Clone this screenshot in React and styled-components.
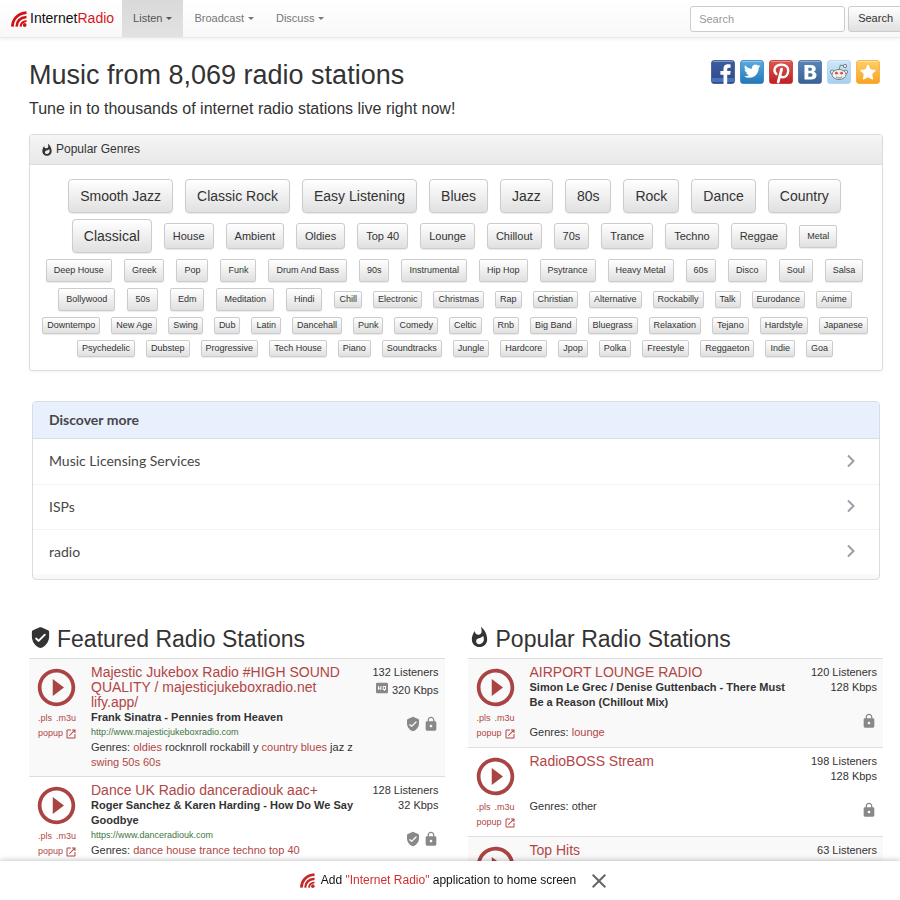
import React from 'react';

import styled, { createGlobalStyle } from 'styled-components';
import {
  MdHighQuality,
  MdLock,
  MdOpenInNew,
  MdPlayCircleOutline,
  MdWhatshot,
} from 'react-icons/md';

const genres = [
  ['lg', ['Smooth Jazz', 'Classic Rock', 'Easy Listening', 'Blues', 'Jazz', '80s', 'Rock', 'Dance', 'Country', 'Classical']],
  ['md', ['House', 'Ambient', 'Oldies', 'Top 40', 'Lounge', 'Chillout', '70s', 'Trance', 'Techno', 'Reggae']],
  ['sm', ['Metal', 'Deep House', 'Greek', 'Pop', 'Funk', 'Drum And Bass', '90s', 'Instrumental', 'Hip Hop', 'Psytrance', 'Heavy Metal', '60s', 'Disco', 'Soul', 'Salsa', 'Bollywood', '50s', 'Edm', 'Meditation', 'Hindi']],
  ['xs', ['Chill', 'Electronic', 'Christmas', 'Rap', 'Christian', 'Alternative', 'Rockabilly', 'Talk', 'Eurodance', 'Anime', 'Downtempo', 'New Age', 'Swing', 'Dub', 'Latin', 'Dancehall', 'Punk', 'Comedy', 'Celtic', 'Rnb', 'Big Band', 'Bluegrass', 'Relaxation', 'Tejano', 'Hardstyle', 'Japanese', 'Psychedelic', 'Dubstep', 'Progressive', 'Tech House', 'Piano', 'Soundtracks', 'Jungle', 'Hardcore', 'Jpop', 'Polka', 'Freestyle', 'Reggaeton', 'Indie', 'Goa']],
];

// genre entries: a string is a link, { text } is plain
const featured = [
  {
    name: 'Majestic Jukebox Radio #HIGH SOUND QUALITY / majesticjukeboxradio.net lify.app/',
    track: 'Frank Sinatra - Pennies from Heaven',
    url: 'http://www.majesticjukeboxradio.com',
    genres: ['oldies', { text: 'rocknroll rockabill y' }, 'country', 'blues', { text: 'jaz z' }, 'swing', '50s', '60s'],
    listeners: 132,
    kbps: 320,
    hq: true,
    verified: true,
  },
  {
    name: 'Dance UK Radio danceradiouk aac+',
    track: 'Roger Sanchez & Karen Harding - How Do We Say Goodbye',
    url: 'https://www.danceradiouk.com',
    genres: ['dance', 'house', 'trance', 'techno', 'top 40'],
    listeners: 128,
    kbps: 32,
    verified: true,
  },
];

const popular = [
  {
    name: 'AIRPORT LOUNGE RADIO',
    track: 'Simon Le Grec / Denise Guttenbach - There Must Be a Reason (Chillout Mix)',
    genres: ['lounge'],
    listeners: 120,
    kbps: 128,
  },
  {
    name: 'RadioBOSS Stream',
    genres: [{ text: 'other' }],
    listeners: 198,
    kbps: 128,
  },
  {
    name: 'Top Hits',
    track: 'Camila Cabello - Never be the same (radio edit)',
    genres: ['top 40'],
    listeners: 63,
    kbps: 128,
  },
];

function Waves({ size }) {
  return (
    <svg width={size} height={size} viewBox="0 0 16 16" fill="none" stroke="currentColor" aria-hidden="true">
      <path d="M1.4 15.6C1.7 8.2 6.6 2.3 15.5 1.7" strokeWidth="2.8" />
      <path d="M5.6 15.6C5.9 10.2 9 6.7 15.5 6.1" strokeWidth="2.5" />
      <path d="M9.600 15.600C9.800 12.600 11.800 10.400 15.500 10" strokeWidth="2.100" />
      <circle cx="13.700" cy="14" r="1.900" fill="currentColor" stroke="none" />
    </svg>
  );
}

function Shield({ size }) {
  return (
    <svg width={size} height={size} viewBox="0 0 24 24" fill="currentColor" aria-hidden="true">
      <path d="M11.190 1.360l-7 3.110C3.470 4.790 3 5.510 3 6.300V11c0 5.550 3.840 10.740 9 12 5.160-1.260 9-6.450 9-12V6.300c0-.79-.47-1.510-1.190-1.830l-7-3.110c-.51-.23-1.110-.23-1.620 0zm-1.900 14.930L6.700 13.700a1 1 0 0 1 1.410-1.410L10 14.170l5.880-5.880a1 1 0 0 1 1.410 1.410l-6.590 6.590c-.38.39-1.020.39-1.410 0z" />
    </svg>
  );
}

const shareLinks = [
  {
    label: 'Facebook',
    from: '#3d5d9f',
    to: '#2f4a87',
    art: (
      <>
        <path d="M1 18h22v4H1z" fill="#4573bd" />
        <path d="M12.5 24v-9.300H9.400v-3.600h3.100V9c0-3.400 2-4.800 4.700-4.800 1 0 1.900.1 2.400.2v3.400h-1.700c-1.400 0-1.700.7-1.700 1.700v1.600h3.500l-.5 3.600h-3V24z" fill="#fff" />
      </>
    ),
  },
  {
    label: 'Twitter',
    from: '#5aade0',
    to: '#2377b8',
    art: (
      <path transform="translate(4 3) scale(.68)" d="M23.95 4.57a10 10 0 0 1-2.82.77 4.96 4.96 0 0 0 2.16-2.72c-.95.55-2 .95-3.13 1.18a4.92 4.92 0 0 0-8.38 4.48C7.69 8.1 4.07 6.13 1.64 3.16a4.92 4.92 0 0 0 1.52 6.57 4.9 4.9 0 0 1-2.23-.61v.06c0 2.39 1.7 4.38 3.95 4.83a5 5 0 0 1-2.22.08 4.94 4.94 0 0 0 4.6 3.42A9.87 9.87 0 0 1 0 19.54a13.99 13.99 0 0 0 7.55 2.21c9.05 0 14-7.5 14-13.98 0-.21 0-.42-.02-.63a9.94 9.94 0 0 0 2.42-2.57z" fill="#fff" />
    ),
  },
  {
    label: 'Pinterest',
    from: '#d95a50',
    to: '#c01f24',
    art: (
      <g fill="none" stroke="#fff" strokeLinecap="round">
        <path d="M7.4 14.2C3.2 9.8 6.6 4.6 12.2 4.6c4.8 0 7.3 2.8 7 6.4-.3 4-2.800 6.200-5.400 6.200-1.400 0-2.300-.6-2.700-1.500" strokeWidth="2.400" />
        <path d="M12.600 9.200L9.200 22" strokeWidth="2.800" />
      </g>
    ),
  },
  {
    label: 'VKontakte',
    from: '#5b84b8',
    to: '#3a6295',
    art: (
      <path fillRule="evenodd" d="M6.500 5h6.300c3.200 0 5 1.500 5 3.800 0 1.500-.8 2.500-2.100 3 1.700.4 2.800 1.600 2.800 3.400 0 2.700-2 4.300-5.400 4.300H6.500zm3.800 2.700v3h1.700c1.300 0 2-.5 2-1.500s-.7-1.500-2-1.500zm0 5.500v3.500h2.100c1.400 0 2.100-.6 2.100-1.800 0-1.100-.8-1.700-2.200-1.700z" fill="#fff" />
    ),
  },
  {
    label: 'Reddit',
    from: '#cde6f7',
    to: '#a5d0ee',
    art: (
      <g stroke="#6b7780" strokeWidth=".9">
        <path d="M12 10l1.300-5 3.800.9" fill="none" />
        <circle cx="18" cy="6" r="1.700" fill="#e6eaec" />
        <circle cx="5.300" cy="12" r="1.900" fill="#e6eaec" />
        <circle cx="18.700" cy="12" r="1.900" fill="#e6eaec" />
        <ellipse cx="12" cy="14.500" rx="7" ry="5" fill="#f1f2f3" />
        <path d="M8.800 16.800c1.800 1.500 4.600 1.500 6.400 0" fill="none" />
        <circle cx="9.400" cy="13.200" r="1.400" fill="#f04b23" stroke="none" />
        <circle cx="14.600" cy="13.200" r="1.400" fill="#f04b23" stroke="none" />
      </g>
    ),
  },
  {
    label: 'Favourites',
    from: '#fdd06a',
    to: '#f9a125',
    art: (
      <path d="M12 5l2.300 4.700 5.200.7-3.800 3.600.9 5.200L12 16.700l-4.600 2.500.9-5.200-3.800-3.600 5.200-.7z" fill="#fff" stroke="#fff" strokeLinejoin="round" />
    ),
  },
];

function ShareIcon({ label, from, to, art }) {
  return (
    <ShareLink href="#" aria-label={label}>
      <svg width="24" height="24" viewBox="0 0 24 24" aria-hidden="true">
        <defs>
          <linearGradient id={`share-${label}`} x1="0" y1="0" x2="0" y2="1">
            <stop offset="0" stopColor={from} />
            <stop offset="1" stopColor={to} />
          </linearGradient>
        </defs>
        <rect x=".5" y=".5" width="23" height="23" rx="2.500" fill={`url(#share-${label})`} stroke={to} strokeOpacity=".7" />
        <path d="M2 1.500h20" stroke="#fff" strokeOpacity=".35" />
        {art}
      </svg>
    </ShareLink>
  );
}

function Station({ station }) {
  return (
    <StationRow>
      <Player>
        <PlayButton type="button" aria-label={`Play ${station.name}`}>
          <MdPlayCircleOutline size={45} />
        </PlayButton>
        <Playlists>
          <a href="#">.pls</a>
          <a href="#">.m3u</a>
          <a href="#">
            popup <MdOpenInNew size={12} />
          </a>
        </Playlists>
      </Player>
      <Info>
        <StationName>
          <a href="#">{station.name}</a>
        </StationName>
        <Track>{station.track}</Track>
        <Homepage>{station.url && <a href="#">{station.url}</a>}</Homepage>
        <p>
          Genres:
          {station.genres.map((genre) => (
            <React.Fragment key={genre.text || genre}>
              {' '}
              {genre.text || <a href="#">{genre}</a>}
            </React.Fragment>
          ))}
        </p>
      </Info>
      <Stats>
        <p>{station.listeners} Listeners</p>
        <Bitrate $hq={station.hq}>
          {station.hq && <MdHighQuality size={16} />}
          <span>{station.kbps} Kbps</span>
        </Bitrate>
        <Badges>
          {station.verified && <Shield size={16} />}
          <MdLock size={16} />
        </Badges>
      </Stats>
    </StationRow>
  );
}

export default function App() {
  return (
    <>
      <GlobalStyle />
      <Navbar>
        <Brand href="#">
          <Waves size={16} />
          <span>
            Internet<em>Radio</em>
          </span>
        </Brand>
        <Menu>
          <MenuButton type="button" $active>Listen</MenuButton>
          <MenuButton type="button">Broadcast</MenuButton>
          <MenuButton type="button">Discuss</MenuButton>
        </Menu>
        <SearchForm>
          <input type="search" placeholder="Search" aria-label="Search" />
          <button type="button">Search</button>
        </SearchForm>
      </Navbar>

      <Page>
        <Intro>
          <div>
            <h1>Music from 8,069 radio stations</h1>
            <Lead>Tune in to thousands of internet radio stations live right now!</Lead>
          </div>
          <Share>
            {shareLinks.map((link) => (
              <ShareIcon key={link.label} {...link} />
            ))}
          </Share>
        </Intro>

        <Panel>
          <PanelHeading>
            <MdWhatshot size={14} />
            Popular Genres
          </PanelHeading>
          <Genres>
            {genres.map(([size, names]) =>
              names.map((name) => (
                <Genre key={name} href="#" $size={size}>
                  {name}
                </Genre>
              ))
            )}
          </Genres>
        </Panel>

        <Discover>
          <h3>Discover more</h3>
          {['Music Licensing Services', 'ISPs', 'radio'].map((topic) => (
            <Topic key={topic} href="#">
              {topic}
              <svg width="8" height="14" viewBox="0 0 8 14" fill="none" stroke="currentColor" strokeWidth="2" aria-hidden="true">
                <path d="M1 1.500L6.500 7L1 12.500" />
              </svg>
            </Topic>
          ))}
        </Discover>

        <Columns>
          <section>
            <Heading>
              <Shield size={23} />
              Featured Radio Stations
            </Heading>
            {featured.map((station) => (
              <Station key={station.name} station={station} />
            ))}
          </section>
          <section>
            <Heading>
              <MdWhatshot size={23} />
              Popular Radio Stations
            </Heading>
            {popular.map((station) => (
              <Station key={station.name} station={station} />
            ))}
          </section>
        </Columns>
      </Page>

      <InstallBar>
        <InstallLink href="#">
          <Waves size={15} />
          <span>
            Add <em>"Internet Radio"</em> application to home screen
          </span>
        </InstallLink>
        <CloseButton type="button" aria-label="Close">
          <svg width="14" height="14" viewBox="0 0 14 14" stroke="currentColor" strokeWidth="2" aria-hidden="true">
            <path d="M.7.7l12.600 12.600M13.300.7L.7 13.300" />
          </svg>
        </CloseButton>
      </InstallBar>
    </>
  );
}

const GlobalStyle = createGlobalStyle`
  * {
    box-sizing: border-box;
  }

  html {
    overflow-x: hidden;
    scrollbar-width: none;
  }

  body {
    margin: 0;
    background: #fff;
    color: #333;
    font: 11px/15px "Liberation Sans", Arial, sans-serif;
  }

  h1, h2, h3, p {
    margin: 0;
    font-weight: normal;
  }

  h1 {
    font-size: 27px;
    line-height: 30px;
  }

  a {
    color: #b14645;
    text-decoration: none;
  }

  em {
    font-style: normal;
  }

  button, input {
    font: inherit;
  }

  svg {
    flex-shrink: 0;
  }
`;

const Navbar = styled.nav`
  display: flex;
  height: 38px;
  overflow: hidden;
  background: linear-gradient(#fff, #f8f8f8);
  border-bottom: 1px solid #e9e9e9;
  box-shadow: 0 1px 4px rgba(0, 0, 0, 0.08);
`;

const Brand = styled.a`
  display: flex;
  align-items: center;
  gap: 3px;
  padding: 0 8px 0 11px;
  color: #d10f14;
  font-size: 14px;

  span {
    color: #111;
  }

  em {
    color: #d8161b;
  }
`;

const Menu = styled.div`
  display: flex;
  flex: 1;
`;

const MenuButton = styled.button`
  display: flex;
  align-items: center;
  gap: 4px;
  padding: 0 11px;
  border: 0;
  background: ${({ $active }) => ($active ? 'linear-gradient(#d9d9d9, #e2e2e2)' : 'none')};
  color: ${({ $active }) => ($active ? '#555' : '#777')};

  &::after {
    content: '';
    border: 3px solid transparent;
    border-top-color: currentColor;
    border-bottom: 0;
  }
`;

const SearchForm = styled.form`
  display: flex;
  gap: 3px;
  align-items: center;
  margin-right: -3px;

  input,
  button {
    height: 26px;
    border: 1px solid #ccc;
    border-radius: 3px;
  }

  input {
    width: 155px;
    padding: 0 8px;
    background: #fff;
    color: #555;
    outline: 0;
  }

  input::placeholder {
    color: #999;
  }

  button {
    padding: 0 9px;
    background: linear-gradient(#fff, #e0e0e0);
    color: #333;
  }
`;

const Page = styled.main`
  padding: 22px 17px 39px 29px;
`;

const Intro = styled.header`
  display: flex;
  justify-content: space-between;
  margin-bottom: 14px;
`;

const Lead = styled.p`
  margin-top: 8px;
  font-size: 16px;
  line-height: 22px;
`;

const Share = styled.div`
  display: flex;
  gap: 5px;
  align-self: flex-start;
  padding-right: 3px;
`;

const ShareLink = styled.a`
  display: flex;
`;

const Panel = styled.section`
  border: 1px solid #ddd;
  border-radius: 3px;
  box-shadow: 0 1px 2px rgba(0, 0, 0, 0.05);
`;

const PanelHeading = styled.h3`
  display: flex;
  align-items: center;
  gap: 2px;
  padding: 7px 10px;
  border-bottom: 1px solid #ddd;
  background: linear-gradient(#f5f5f5, #e8e8e8);
  font-size: 12px;
`;

const Genres = styled.div`
  display: flex;
  flex-wrap: wrap;
  align-items: center;
  justify-content: center;
  gap: 6px 11px;
  padding: 14px 13px 13px 11px;
`;

const genreSizes = {
  lg: 'height: 34px; margin-right: 1px; padding: 0 11px; font-size: 14px; border-radius: 4px;',
  md: 'height: 26px; margin-right: 1px; padding: 0 8px; font-size: 11px; border-radius: 3px;',
  sm: 'height: 23px; margin-right: 1px; padding: 0 7px; font-size: 9px; border-radius: 2px;',
  xs: 'height: 17px; padding: 0 4px; font-size: 9px; border-radius: 2px;',
};

const Genre = styled.a`
  display: flex;
  align-items: center;
  border: 1px solid #ccc;
  background: linear-gradient(#fff, #e0e0e0);
  box-shadow: 0 1px 1px rgba(0, 0, 0, 0.08);
  color: #333;
  white-space: nowrap;
  ${({ $size }) => genreSizes[$size]}
`;

const Discover = styled.section`
  margin: 30px 3px 46px;
  padding-bottom: 5px;
  overflow: hidden;
  border: 1px solid #dadce0;
  border-radius: 4px;
  background: #f8f9fa;
  color: #474747;
  font-family: Lato, sans-serif;

  h3 {
    padding: 8px 16px;
    border-bottom: 1px solid #dadce0;
    background: #e8effd;
    font-size: 14px;
    font-weight: bold;
    line-height: 20px;
  }
`;

const Topic = styled.a`
  display: flex;
  align-items: center;
  justify-content: space-between;
  height: 45px;
  padding: 0 24px 2px 16px;
  background: #fff;
  color: #474747;
  font-size: 14px;

  & + & {
    border-top: 1px solid #f3f4f5;
  }

  svg {
    color: #9aa0a6;
  }
`;

const Columns = styled.div`
  display: grid;
  grid-template-columns: 1fr 1fr;
  gap: 23px;
`;

const Heading = styled.h2`
  display: flex;
  align-items: flex-start;
  gap: 5px;
  margin-bottom: 6px;
  font-size: 23px;
  line-height: 26px;
`;

const StationRow = styled.article`
  display: flex;
  gap: 12px;
  padding: 6px 6px 6px 5px;
  border-top: 1px solid #ddd;

  &:nth-of-type(odd) {
    background: #f9f9f9;
  }
`;

const Player = styled.div`
  flex: 0 0 45px;
`;

const PlayButton = styled.button`
  display: flex;
  padding: 0;
  border: 0;
  background: none;
  color: #a94442;
`;

const Playlists = styled.div`
  display: flex;
  flex-wrap: wrap;
  column-gap: 4px;
  padding: 1px 0 0 4px;
  font-size: 9px;

  a {
    display: flex;
    gap: 2px;
    align-items: center;
    white-space: nowrap;
  }
`;

const Info = styled.div`
  flex: 1;
  min-width: 0;
`;

const StationName = styled.h3`
  font-size: 14px;
`;

const Track = styled.p`
  min-height: 15px;
  font-weight: bold;
`;

const Homepage = styled.p`
  min-height: 15px;
  font-size: 9px;

  a {
    color: #3c763d;
  }
`;

const Stats = styled.div`
  flex: 0 0 72px;
  text-align: right;
`;

const Bitrate = styled.p`
  display: flex;
  align-items: flex-start;
  justify-content: flex-end;
  gap: 2px;

  span {
    padding-top: ${({ $hq }) => ($hq ? '3px' : '0')};
  }

  svg {
    color: #888;
  }
`;

const Badges = styled.div`
  display: flex;
  gap: 2px;
  justify-content: flex-end;
  margin-top: 18px;
  color: #888;
`;

const InstallBar = styled.aside`
  position: fixed;
  right: 0;
  bottom: 0;
  left: 0;
  display: flex;
  align-items: center;
  justify-content: center;
  gap: 16px;
  height: 39px;
  padding-left: 6px;
  background: #fff;
  box-shadow: 0 0 6px rgba(0, 0, 0, 0.3);
`;

const InstallLink = styled.a`
  display: flex;
  align-items: center;
  gap: 6px;
  color: #c62828;
  font-size: 12px;

  span {
    color: #111;
  }

  em {
    color: #d32f2f;
  }
`;

const CloseButton = styled.button`
  display: flex;
  padding: 0;
  border: 0;
  background: none;
  color: #666;
`;
